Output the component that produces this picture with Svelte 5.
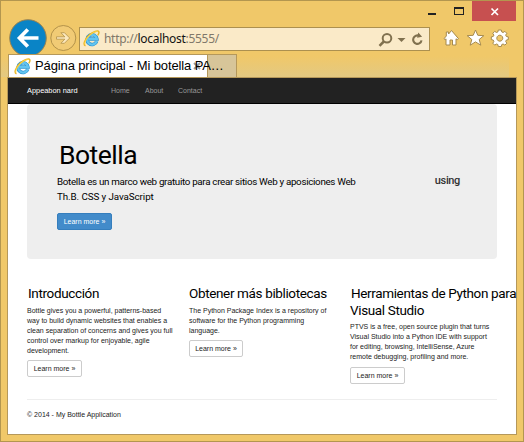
<script>
  const columns = [
    { title: ['Introducción'], text: ['Bottle gives you a powerful, patterns-based', 'way to build dynamic websites that enables a', 'clean separation of concerns and gives you full', 'control over markup for enjoyable, agile', 'development.'] },
    { title: ['Obtener más bibliotecas'], text: ['The Python Package Index is a repository of', 'software for the Python programming', 'language.'] },
    { title: ['Herramientas de Python para', 'Visual Studio'], text: ['PTVS is a free, open source plugin that turns', 'Visual Studio into a Python IDE with support', 'for editing, browsing, IntelliSense, Azure', 'remote debugging, profiling and more.'] }
  ];
</script>

{#snippet ie()}
  <svg class="ie" width="17" height="17" viewBox="0 0 17 17">
    <path d="M13.700 11.200A4.900 4.900 0 1 1 13.900 9H5.500" fill="none" stroke="#2a8fcd" stroke-width="3.500" />
    <path d="M13.700 11.200A4.900 4.900 0 1 1 13.900 9H5.500" fill="none" stroke="#62c4f0" stroke-width="2.300" />
    <path d="M2.500 15.800C-.4 14.700 1.800 9.400 6 5.400C10.300 1.300 15 .1 15.800 1.800C16.200 2.800 15.600 4.200 14.800 5.400" fill="none" stroke="#eab525" stroke-width="1.500" />
    <path d="M2 14.500C1.400 12.500 3 9 6.300 5.700C9.700 2.400 13.400 .9 15 1.800" fill="none" stroke="#ffdc55" stroke-width=".9" />
  </svg>
{/snippet}

<div class="window">
  <header class="caption">
    <svg width="88" height="20" viewBox="0 0 88 20">
      <path d="M0 12h8v2H0z" fill="#222" />
      <path d="M26 6h10v8H26zM27 8v5h8V8z" fill="#222" fill-rule="evenodd" />
      <path d="M44 0h45v20H44z" fill="#c75050" />
      <path d="M63.500 7.500l6.500 6.500M70 7.500L63.500 14" stroke="#fff" stroke-width="1.700" />
    </svg>
  </header>
  <div class="toolbar">
    <svg class="nav" width="70" height="38" viewBox="0 0 70 38">
      <circle cx="19" cy="19" r="18.300" fill="#0a84c6" stroke="#9b8350" />
      <path d="M29.500 19H11M18.800 10.500L10.500 19l8.300 8.500" fill="none" stroke="#fff" stroke-width="3.700" />
      <circle cx="54.300" cy="19" r="12.500" fill="#f1cb75" stroke="#b3924a" />
      <path d="M47.500 17.800h8.300l-3.900-4.100h3.500l5.300 5.300-5.300 5.300h-3.500l3.900-4.100h-8.300z" fill="#fbe8bd" stroke="#b3924a" stroke-width=".8" />
    </svg>
    <div class="address">
      {@render ie()}
      <span class="url">http://<b>localhost</b>:5555/</span>
      <svg class="tools" width="48" height="20" viewBox="0 0 48 20">
        <g fill="none" stroke="#80714f">
          <circle cx="9" cy="8.300" r="4.300" stroke-width="2" />
          <path d="M5.800 11.500L1.500 15.800" stroke-width="2.500" />
          <path d="M43.500 10.300a4.200 4.200 0 1 1-2.200-4.400" stroke-width="2.100" />
        </g>
        <path d="M19.500 8h8L23.500 12zM40.300 2.500l3.800 4.200-5 1z" fill="#80714f" />
      </svg>
    </div>
    <svg class="actions" width="68" height="18" viewBox="0 0 68 18">
      <g fill="#fff" stroke="#a58a4e" stroke-width="1" stroke-linejoin="round">
        <path d="M1 9.700L3.300 7V3h2.300v2L8.500 1.500l7 8.200-1.300 1-1.200-.9V16H9.500v-5H7v5H3V9.800l-.9.900z" />
        <path d="M32.500 1l2.300 5.300 6 .4-4.600 3.800 1.600 5.700-5.300-3.300-5.300 3.300 1.600-5.700-4.600-3.800 6-.4z" />
        <path fill-rule="evenodd" d="M55.300 1h3l.5 2 1.300.5 1.800-1.100 1.900 1.900-1.100 1.800.6 1.300 2 .5v2.700l-2 .5-.6 1.300 1.100 1.800-1.900 1.900-1.800-1.100-1.300.5-.5 2h-3l-.5-2-1.300-.5-1.800 1.100-1.900-1.900 1.100-1.800-.6-1.300-2-.5V7.900l2-.5.6-1.300-1.100-1.800 1.900-1.900 1.800 1.100 1.300-.5zM56.800 6.200a3 3 0 1 0 .01 0z" />
      </g>
    </svg>
  </div>
  <div class="tabs">
    <div class="tab">
      {@render ie()}
      <span class="tabtitle">Página principal - Mi botella PA…</span>
      <svg class="tabclose" width="8" height="8" viewBox="0 0 8 8"><path d="M1 1l6 6M7 1L1 7" stroke="#999" stroke-width="1.800" /></svg>
    </div>
    <div class="newtab"></div>
  </div>

  <main class="page">
    <nav>
      <span class="brand">Appeabon nard</span><span class="home">Home</span><span class="about">About</span><span>Contact</span>
    </nav>
    <section class="hero">
      <div class="pitch">
        <h1>Botella</h1>
        <p><span class="l1">Botella es un marco web gratuito para crear sitios Web y aposiciones Web</span><br /><span class="l2">Th.B. CSS y JavaScript</span></p>
        <button class="primary">Learn more »</button>
      </div>
      <span class="using">using</span>
    </section>
    <section class="columns">
      {#each columns as col, i}
        <article class="c{i}">
          <h2>{#each col.title as line}<span>{line}</span>{/each}</h2>
          <p>{#each col.text as line}<span>{line}</span>{/each}</p>
          <button>Learn more »</button>
        </article>
      {/each}
    </section>
    <footer>© 2014 - My Bottle Application</footer>
  </main>
</div>

<style>
  :global(body) { margin: 0; }
  * { box-sizing: border-box; }
  .window { width: 524px; height: 442px; background: #f0c869; border: 1px solid #b3964f; font-family: "Liberation Sans", Arial, sans-serif; display: flex; flex-direction: column; overflow: hidden; }
  svg { display: block; flex: none; }
  .caption { height: 20px; flex: none; display: flex; justify-content: flex-end; padding-right: 7px; }
  .toolbar { height: 33px; flex: none; display: flex; align-items: flex-start; padding-left: 8px; }
  .nav { margin-top: -2px; }
  .address { width: 351px; height: 24px; margin-top: 6px; background: #faeac8; border: 1px solid #ac904f; display: flex; align-items: center; padding-left: 3px; }
  .address .ie { margin-top: -1px; }
  .url { font: 12px/22px "Noto Sans", sans-serif; color: #80786a; margin-left: 4px; letter-spacing: -.3px; white-space: nowrap; }
  .url b { font-weight: 400; color: #111; }
  .tools { margin: 2px 3px 0 auto; }
  .actions { margin: 8px 0 0 13px; }
  .tabs { height: 23px; flex: none; display: flex; padding-left: 7px; margin-right: 14px; background: linear-gradient(#f0c869 10%, #e3c982); }
  .tab { position: relative; width: 200px; height: 23px; background: #fff; border: 1px solid #b5985a; border-bottom: 0; display: flex; align-items: center; padding-left: 5px; z-index: 1; }
  .tabtitle { font: 13px/22px "Liberation Sans", sans-serif; color: #000; margin-left: 4px; letter-spacing: -.12px; white-space: nowrap; z-index: 1; }
  .tabclose { position: absolute; left: 184px; top: 7px; }
  .newtab { width: 29px; border: 1px solid #b5985a; border-width: 1px 1px 0 0; background: #d7c599; }
  .page { width: 510px; height: 358px; flex: none; margin-left: 6px; background: #fff; border: 1px solid #b5985a; color: #222; }
  nav { height: 26px; background: #222; border-bottom: 1px solid #000; display: flex; align-items: center; padding-left: 19px; font-size: 7px; color: #999; white-space: nowrap; }
  .brand { width: 84px; color: #fff; font-size: 7.400px; }
  .home { width: 34px; }
  .about { width: 33px; }
  .hero { width: 470px; height: 155px; margin-left: 19px; background: #eee; border-radius: 4px; display: flex; padding: 33px 37px 0 30px; justify-content: space-between; }
  .pitch { color: #000; white-space: nowrap; }
  h1 { font: 400 26.500px/34px Roboto, sans-serif; letter-spacing: -.5px; margin: 1px 0 0 2px; }
  .pitch p { font: 9.800px/15px Roboto, sans-serif; margin: 2px 0 9px; }
  .l1 { letter-spacing: -.31px; }
  .l2 { letter-spacing: -.08px; }
  .using { font: 500 11px/14px Roboto, sans-serif; letter-spacing: -.35px; margin-top: 37px; color: #333; }
  button { display: block; width: 55px; height: 17px; border: 1px solid #ccc; border-radius: 2px; background: #fff; color: #222; font: 7px/14px "Liberation Sans", sans-serif; padding: 0; white-space: nowrap; }
  .primary { background: #428bca; border-color: #357ebd; color: #fff; }
  .columns { height: 140px; margin-left: 19px; padding-top: 26px; display: flex; }
  article { width: 162px; flex: none; white-space: nowrap; }
  h2 { font: 400 13.500px/17px Roboto, sans-serif; letter-spacing: -.36px; color: #000; margin: 0; }
  h2 span, article p span { display: block; }
  .c0 h2 span, .c2 h2 span:first-child { margin-left: 1px; }
  .c2 { margin-left: -1px; }
  .c1 button { width: 54px; }
  article p { font-size: 7px; line-height: 10px; margin: 4px 0 4px; }
  .c2 p { margin: 3px 0 5px; }
  footer { width: 470px; margin-left: 19px; border-top: 1px solid #eee; font-size: 7px; line-height: 10px; padding-top: 10px; }
</style>
